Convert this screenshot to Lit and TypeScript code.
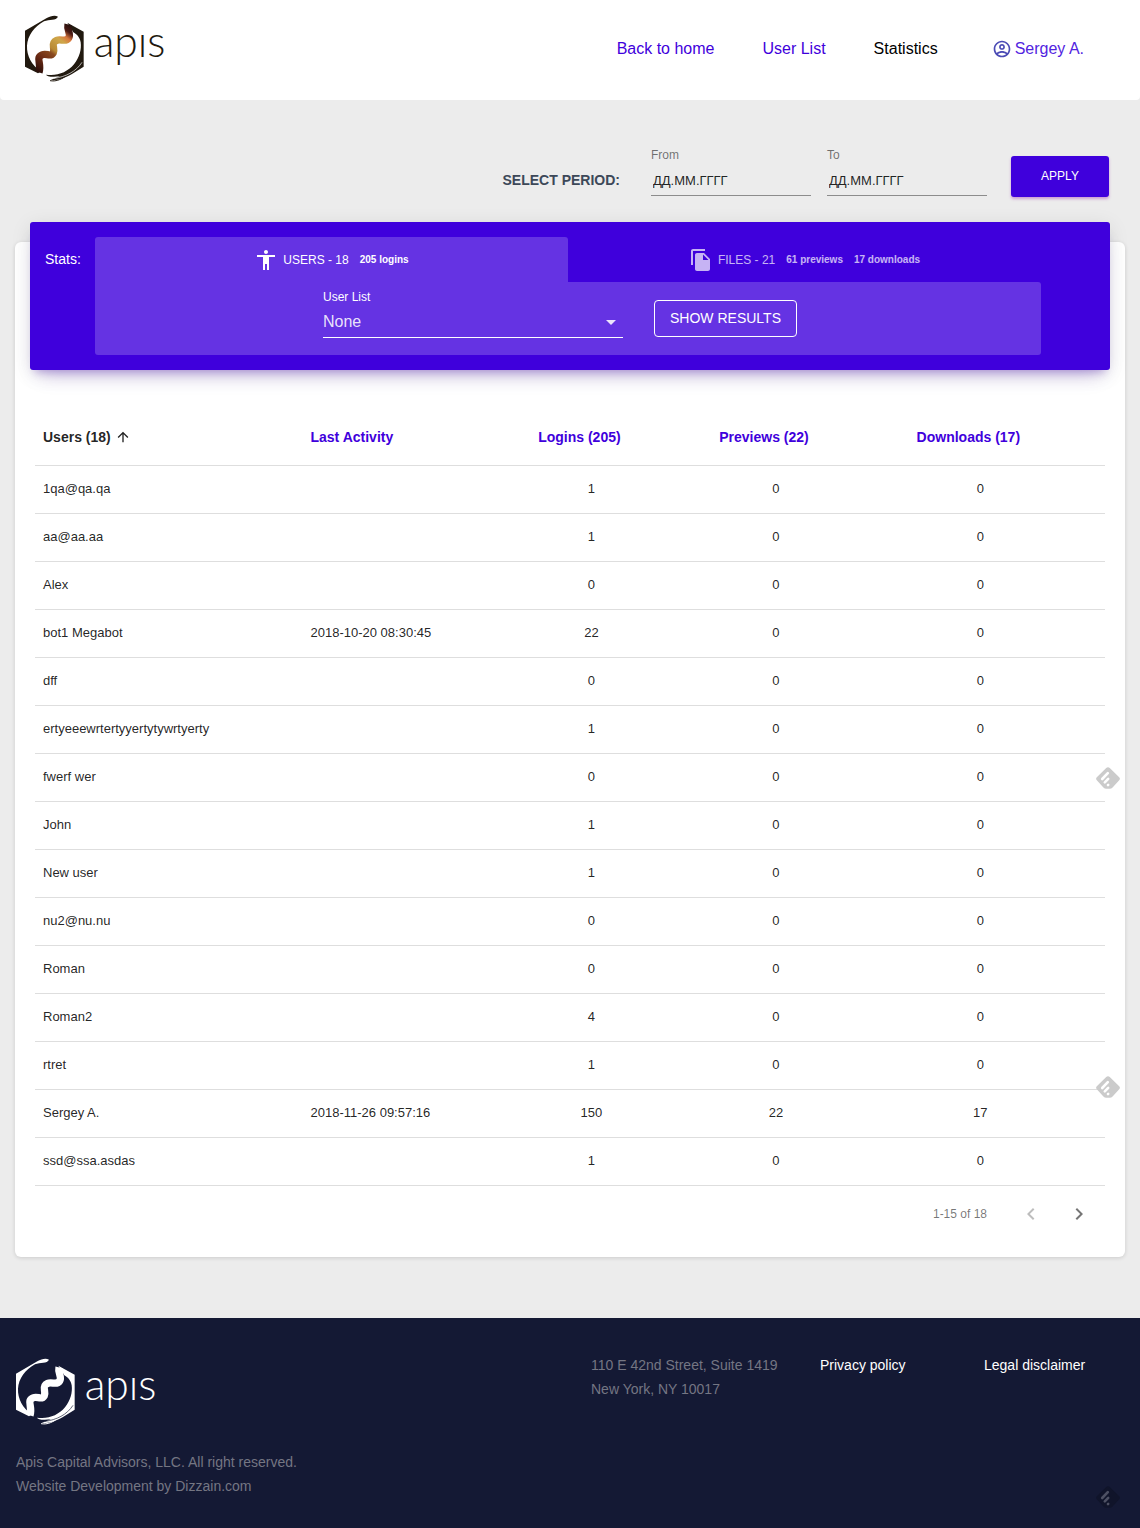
import { LitElement, html, css, svg } from "lit";
import { customElement, property } from "lit/decorators.js";
import { classMap } from "lit/directives/class-map.js";

interface UserRow {
  name: string;
  activity: string;
  logins: number;
  previews: number;
  downloads: number;
}

const row = (name: string, logins = 0, activity = "", previews = 0, downloads = 0): UserRow => ({
  name,
  activity,
  logins,
  previews,
  downloads,
});

const USERS: UserRow[] = [
  row("1qa@qa.qa", 1),
  row("aa@aa.aa", 1),
  row("Alex"),
  row("bot1 Megabot", 22, "2018-10-20 08:30:45"),
  row("dff"),
  row("ertyeeewrtertyyertytywrtyerty", 1),
  row("fwerf wer"),
  row("John", 1),
  row("New user", 1),
  row("nu2@nu.nu"),
  row("Roman"),
  row("Roman2", 4),
  row("rtret", 1),
  row("Sergey A.", 150, "2018-11-26 09:57:16", 22, 17),
  row("ssd@ssa.asdas", 1),
];

const ICONS = {
  account:
    "M12 2C6.48 2 2 6.48 2 12s4.48 10 10 10 10-4.48 10-10S17.52 2 12 2zM7.07 18.28c.43-.9 3.05-1.78 4.93-1.78s4.51.88 4.93 1.78C15.57 19.36 13.86 20 12 20s-3.57-.64-4.93-1.72zm11.29-1.45c-1.43-1.74-4.9-2.33-6.36-2.33s-4.93.59-6.36 2.33A7.95 7.95 0 0 1 4 12c0-4.41 3.59-8 8-8s8 3.59 8 8c0 1.82-.62 3.49-1.64 4.83zM12 6c-1.94 0-3.5 1.56-3.5 3.5S10.06 13 12 13s3.5-1.56 3.5-3.5S13.94 6 12 6zm0 5c-.83 0-1.5-.67-1.5-1.5S11.17 8 12 8s1.5.67 1.5 1.5S12.83 11 12 11z",
  person:
    "M12 2c1.1 0 2 .9 2 2s-.9 2-2 2-2-.9-2-2 .9-2 2-2zm9 7h-6v13h-2v-6h-2v6H9V9H3V7h18v2z",
  files:
    "M16 1H4c-1.1 0-2 .9-2 2v14h2V3h12V1zm-1 4l6 6v10c0 1.1-.9 2-2 2H7.99C6.89 23 6 22.1 6 21l.01-14c0-1.1.89-2 1.99-2h7zm-1 7h5.5L14 6.5V12z",
  up: "M4 12l1.41 1.41L11 7.83V20h2V7.83l5.58 5.59L20 12l-8-8-8 8z",
  caret: "M7 10l5 5 5-5z",
  left: "M15.41 7.41L14 6l-6 6 6 6 1.41-1.41L10.83 12z",
  right: "M10 6L8.59 7.41 13.17 12l-4.58 4.59L10 18l6-6z",
};

const icon = (path: string, size = 24) => html`
  <svg width=${size} height=${size} viewBox="0 0 24 24" fill="currentColor" aria-hidden="true">
    ${svg`<path d=${path}></path>`}
  </svg>
`;

@customElement("apis-logo")
class ApisLogo extends LitElement {
  @property({ type: Boolean }) light = false;

  static styles = css`
    :host {
      display: block;
      line-height: 0;
    }
    svg {
      overflow: visible;
    }
    .word {
      font-family: Lato, "Open Sans", sans-serif;
      font-weight: 300;
      font-size: 128px;
    }
  `;

  render() {
    const ink = this.light ? "#ffffff" : "#21190f";
    const snake = this.light ? "#ffffff" : "url(#snake)";
    return html`
      <svg width="141" height="68" viewBox="45 27 423 204" role="img" aria-label="apis">
        <defs>
          <linearGradient id="snake" gradientUnits="userSpaceOnUse" x1="84" y1="198" x2="184" y2="62">
            <stop offset="0" stop-color="#2d0f0a"></stop>
            <stop offset="0.22" stop-color="#6b2a14"></stop>
            <stop offset="0.4" stop-color="#8a4a1f"></stop>
            <stop offset="0.47" stop-color="#b98a35"></stop>
            <stop offset="0.68" stop-color="#cfa74a"></stop>
            <stop offset="0.78" stop-color="#d9773d"></stop>
            <stop offset="0.88" stop-color="#4a1a14"></stop>
            <stop offset="1" stop-color="#24100c"></stop>
          </linearGradient>
        </defs>
        <path
          fill=${ink}
          d="M144 35C134 29 122 33 109 40L45 77V185L84 205L94 199C64 180 50 152 51 122C53 92 72 66 102 49C118 41 138 48 144 35Z"
        ></path>
        <path
          fill=${ink}
          d="M172 53L221 80V185L186 207C160 222 138 227 122 225L150 214C124 217 110 214 108 209C142 214 172 202 192 178C208 158 215 134 212 112C209 98 203 90 190 82Z"
        ></path>
        <path
          fill="none"
          stroke=${this.light ? "#141934" : "#ffffff"}
          stroke-width="2"
          d="M132 220C166 216 198 200 216 172"
        ></path>
        <path
          fill="none"
          stroke=${ink}
          stroke-width="3"
          d="M120 227C138 230 150 224 164 216"
        ></path>
        <path
          fill="none"
          stroke=${snake}
          stroke-width="22"
          stroke-linejoin="round"
          d="M174 58C170 76 184 86 176 99C167 113 153 100 140 106C120 115 136 128 130 143C122 158 110 144 98 149C74 158 96 174 87 202"
        ></path>
        <text class="word" x="251" y="155" fill=${ink}>apıs</text>
      </svg>
    `;
  }
}

@customElement("feed-badge")
class FeedBadge extends LitElement {
  static styles = css`
    :host {
      display: block;
      line-height: 0;
    }
  `;

  render() {
    return html`
      <svg width="24" height="22" viewBox="0 0 24 22" aria-hidden="true">
        <path
          fill="var(--badge, #cbcbcb)"
          d="M10.2 .9Q12 -.6 13.8 .9L23.2 10.2Q24.6 11.7 23.2 13.2L16.6 20.6Q15.4 21.8 13.8 21.8H10.2Q8.6 21.8 7.4 20.6L.8 13.2Q-.6 11.7 .8 10.2Z"
        ></path>
        <path
          fill="none"
          stroke="var(--mark, #ffffff)"
          stroke-width="2.6"
          stroke-linecap="round"
          d="M6.2 12L11.8 6.2M8.8 15.4L12.2 11.9M12 18L12.2 17.8"
        ></path>
      </svg>
    `;
  }
}

@customElement("app-root")
class AppRoot extends LitElement {
  static styles = css`
    :host {
      display: block;
      position: relative;
      background: #ececec;
      color: rgba(0, 0, 0, 0.87);
      font-family: "Liberation Sans", Arial, sans-serif;
      font-size: 13px;
      line-height: 16px;
    }
    * {
      box-sizing: border-box;
    }
    svg {
      display: block;
      flex: none;
    }
    a {
      color: inherit;
      text-decoration: none;
    }
    button,
    input,
    select {
      margin: 0;
      padding: 0;
      border: 0;
      background: none;
      color: inherit;
      font: inherit;
    }
    button {
      cursor: pointer;
    }

    .header {
      display: flex;
      justify-content: space-between;
      align-items: flex-start;
      height: 100px;
      padding: 14px 56px 0 25px;
      background: #ffffff;
      border-radius: 0 0 4px 4px;
    }
    .nav {
      display: flex;
      gap: 48px;
      padding-top: 25px;
      color: #3f00dc;
      font-size: 16px;
      line-height: 20px;
    }
    .nav .current {
      color: #000000;
    }
    .account {
      display: flex;
      gap: 3px;
      padding-left: 6px;
      color: #5224df;
    }
    .account svg {
      color: #4b4bb5;
    }

    .main {
      padding: 47px 15px 61px;
    }
    .period {
      display: flex;
      justify-content: flex-end;
      align-items: flex-start;
      gap: 16px;
      margin-bottom: 45px;
      padding-right: 16px;
    }
    .period-title {
      margin: 25px 15px 0 0;
      color: #3c4858;
      font-size: 14px;
      font-weight: 700;
    }
    .field {
      display: flex;
      flex-direction: column;
      gap: 2px;
      width: 160px;
      font-size: 12px;
    }
    .field label {
      color: rgba(0, 0, 0, 0.54);
    }
    .field input {
      width: 100%;
      height: 31px;
      padding-left: 2px;
      border-bottom: 1px solid #8c8c8c;
      font-size: 13px;
    }
    .field input::placeholder {
      color: rgba(0, 0, 0, 0.87);
      opacity: 1;
    }
    .apply {
      width: 98px;
      height: 41px;
      margin: 9px 0 0 8px;
      padding-bottom: 2px;
      border-radius: 3px;
      background: #3f00dc;
      color: #ffffff;
      font-size: 12px;
      box-shadow: 0 2px 3px rgba(156, 39, 176, 0.4);
    }

    .card {
      padding: 0 15px 15px;
      border-radius: 6px;
      background: #ffffff;
      box-shadow: 0 1px 4px rgba(0, 0, 0, 0.14);
    }
    .stats {
      display: grid;
      grid-template-columns: 50px 1fr 54px;
      position: relative;
      top: -20px;
      padding: 15px;
      border-radius: 3px;
      background: #3f00dc;
      color: #ffffff;
      box-shadow:
        0 12px 20px -10px rgba(63, 0, 176, 0.28),
        0 4px 20px rgba(0, 0, 0, 0.1),
        0 7px 8px -5px rgba(63, 0, 176, 0.25);
    }
    .stats-title {
      padding-top: 14px;
      font-size: 14px;
    }
    .tabs {
      display: grid;
      grid-template-columns: 1fr 1fr;
    }
    .tab {
      display: flex;
      justify-content: center;
      align-items: center;
      gap: 5px;
      height: 45px;
      border-radius: 3px 3px 0 0;
      font-size: 12px;
    }
    .tab small {
      margin-left: 6px;
      font-size: 10px;
      font-weight: 700;
    }
    .tab.active {
      background: #6533e3;
    }
    .tab.idle > * {
      opacity: 0.7;
    }
    .filter {
      display: flex;
      justify-content: center;
      gap: 31px;
      padding: 7px 16px 17px 0;
      border-radius: 0 3px 3px 3px;
      background: #6533e3;
    }
    .filter .field {
      width: 300px;
    }
    .filter label {
      color: #ffffff;
    }
    .select {
      display: grid;
      align-items: center;
      height: 31px;
      border-bottom: 1px solid #ffffff;
      color: rgba(255, 255, 255, 0.87);
    }
    .select > * {
      grid-area: 1 / 1;
    }
    .select select {
      height: 30px;
      appearance: none;
      font-size: 16px;
    }
    .select svg {
      justify-self: end;
      pointer-events: none;
    }
    .show {
      height: 37px;
      margin-top: 11px;
      padding: 0 15px 2px;
      border: 1px solid #ffffff;
      border-radius: 4px;
      font-size: 14px;
    }

    .content {
      margin-top: 20px;
      padding: 0 5px;
    }
    .table {
      width: 100%;
      border-collapse: separate;
      border-spacing: 0;
      table-layout: fixed;
    }
    .col-name {
      width: 25%;
    }
    .col-activity {
      width: 17.2%;
    }
    .col-logins {
      width: 19.6%;
    }
    .col-previews {
      width: 14.9%;
    }
    .table th,
    .table td {
      height: 48px;
      padding: 0 8px 2px;
      border-bottom: 1px solid #dedede;
      text-align: left;
    }
    .table th {
      height: 56px;
      padding-bottom: 0;
    }
    .table .num {
      text-align: center;
    }
    .sort {
      display: inline-flex;
      align-items: center;
      gap: 4px;
      color: #3f00dc;
      font-size: 14px;
      font-weight: 700;
      white-space: nowrap;
    }
    .num .sort {
      padding-right: 24px;
    }
    .sort.sorted {
      color: rgba(0, 0, 0, 0.87);
    }
    .pager {
      display: flex;
      justify-content: flex-end;
      align-items: center;
      height: 56px;
      padding-right: 2px;
      color: rgba(0, 0, 0, 0.54);
      font-size: 12px;
    }
    .range {
      margin-right: 20px;
    }
    .page {
      display: grid;
      place-items: center;
      width: 48px;
      height: 48px;
    }
    .page:disabled {
      color: rgba(0, 0, 0, 0.26);
    }

    .footer {
      display: grid;
      grid-template-columns: 575fr 229fr 164fr 140fr;
      row-gap: 25px;
      padding: 35px 16px 30px;
      background: #141934;
      color: #747683;
      font-size: 14px;
      line-height: 24px;
    }
    .footer a {
      color: #ffffff;
    }
    .footer apis-logo {
      padding-top: 4px;
    }
    .footer p {
      margin: 0;
    }
    .legal {
      grid-column: 1 / -1;
    }

    .badge {
      position: absolute;
      right: 20px;
    }
    .badge-upper {
      top: 767px;
    }
    .badge-lower {
      top: 1076px;
    }
    .badge-footer {
      bottom: 20px;
      --badge: #10142a;
      --mark: #4d5063;
    }
  `;

  private heading(label: string, numeric = false, sorted = false) {
    return html`
      <th scope="col" class=${classMap({ num: numeric })} aria-sort=${sorted ? "ascending" : "none"}>
        <button type="button" class=${classMap({ sort: true, sorted })}>
          ${label}${sorted ? icon(ICONS.up, 16) : ""}
        </button>
      </th>
    `;
  }

  render() {
    return html`
      <header class="header">
        <a href="#home"><apis-logo></apis-logo></a>
        <nav class="nav">
          <a href="#home">Back to home</a>
          <a href="#users">User List</a>
          <a href="#statistics" class="current" aria-current="page">Statistics</a>
          <a href="#account" class="account">${icon(ICONS.account, 20)}Sergey A.</a>
        </nav>
      </header>

      <main class="main">
        <form class="period">
          <span class="period-title">SELECT PERIOD:</span>
          <div class="field">
            <label for="from">From</label>
            <input id="from" type="text" placeholder="ДД.ММ.ГГГГ" />
          </div>
          <div class="field">
            <label for="to">To</label>
            <input id="to" type="text" placeholder="ДД.ММ.ГГГГ" />
          </div>
          <button type="button" class="apply">APPLY</button>
        </form>

        <section class="card">
          <div class="stats">
            <span class="stats-title">Stats:</span>
            <div>
              <div class="tabs" role="tablist">
                <button type="button" class="tab active" role="tab" aria-selected="true">
                  ${icon(ICONS.person)}<span>USERS - 18</span><small>205 logins</small>
                </button>
                <button type="button" class="tab idle" role="tab" aria-selected="false">
                  ${icon(ICONS.files)}<span>FILES - 21</span><small>61 previews</small
                  ><small>17 downloads</small>
                </button>
              </div>
              <div class="filter">
                <div class="field">
                  <label for="list">User List</label>
                  <div class="select">
                    <select id="list">
                      <option>None</option>
                    </select>
                    ${icon(ICONS.caret)}
                  </div>
                </div>
                <button type="button" class="show">SHOW RESULTS</button>
              </div>
            </div>
          </div>

          <div class="content">
            <table class="table">
              <colgroup>
                <col class="col-name" />
                <col class="col-activity" />
                <col class="col-logins" />
                <col class="col-previews" />
                <col />
              </colgroup>
              <thead>
                <tr>
                  ${this.heading("Users (18)", false, true)} ${this.heading("Last Activity")}
                  ${this.heading("Logins (205)", true)} ${this.heading("Previews (22)", true)}
                  ${this.heading("Downloads (17)", true)}
                </tr>
              </thead>
              <tbody>
                ${USERS.map(
                  (user) => html`
                    <tr>
                      <td>${user.name}</td>
                      <td>${user.activity}</td>
                      <td class="num">${user.logins}</td>
                      <td class="num">${user.previews}</td>
                      <td class="num">${user.downloads}</td>
                    </tr>
                  `,
                )}
              </tbody>
            </table>
            <div class="pager">
              <span class="range">1-15 of 18</span>
              <button type="button" class="page" aria-label="Previous page" disabled>
                ${icon(ICONS.left)}
              </button>
              <button type="button" class="page" aria-label="Next page">${icon(ICONS.right)}</button>
            </div>
          </div>
        </section>
      </main>

      <footer class="footer">
        <apis-logo light></apis-logo>
        <p>110 E 42nd Street, Suite 1419<br />New York, NY 10017</p>
        <a href="#privacy">Privacy policy</a>
        <a href="#disclaimer">Legal disclaimer</a>
        <p class="legal">
          Apis Capital Advisors, LLC. All right reserved.<br />Website Development by Dizzain.com
        </p>
      </footer>

      <feed-badge class="badge badge-upper"></feed-badge>
      <feed-badge class="badge badge-lower"></feed-badge>
      <feed-badge class="badge badge-footer"></feed-badge>
    `;
  }
}
